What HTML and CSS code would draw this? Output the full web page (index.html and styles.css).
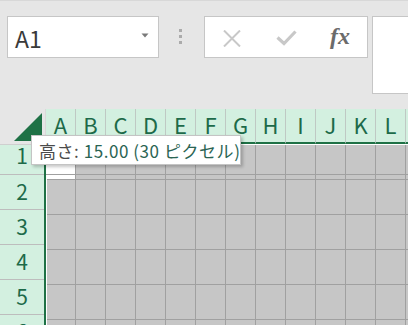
FILE: index.html
```html
<!DOCTYPE html>
<html lang="ja">
<head>
<meta charset="utf-8">
<title>Excel</title>
<link rel="stylesheet" href="styles.css">
</head>
<body>
<div class="app">
  <div class="toolbar">
    <div class="namebox">
      <span class="ref">A1</span>
      <svg class="caret" width="8" height="5" viewBox="0 0 8 5"><polygon points="0.5,0.5 7.5,0.5 4,4.5" fill="#7a7a7a"/></svg>
    </div>
    <div class="grip"><i></i><i></i><i></i></div>
    <div class="fbtns">
      <svg class="cancel" width="18" height="17" viewBox="0 0 18 17"><path d="M1 0.5 L17 16.5 M17 0.5 L1 16.5" stroke="#c8c8c8" stroke-width="2" fill="none"/></svg>
      <svg class="enter" width="21" height="16" viewBox="0 0 21 16"><path d="M1.5 7.5 L8 13.5 L19.5 1.5" stroke="#c8c8c8" stroke-width="3.2" fill="none"/></svg>
      <span class="fx"><i>f</i><i>x</i></span>
    </div>
    <div class="finput"></div>
  </div>
  <div class="sheet">
    <div class="colrow">
      <div class="corner"><svg width="45" height="35" viewBox="0 0 45 35"><polygon points="14,32 42,4 42,32" fill="#1e7145"/></svg></div>
      <div class="cols">
        <div class="ch">A</div><div class="ch">B</div><div class="ch">C</div><div class="ch">D</div><div class="ch">E</div><div class="ch">F</div><div class="ch">G</div><div class="ch">H</div><div class="ch">I</div><div class="ch">J</div><div class="ch">K</div><div class="ch">L</div><div class="ch"></div>
      </div>
    </div>
    <div class="body">
      <div class="rowheads">
        <div class="rh first">1</div>
        <div class="rh">2</div>
        <div class="rh">3</div>
        <div class="rh">4</div>
        <div class="rh">5</div>
        <div class="rh">6</div>
      </div>
      <div class="grid">
        <div class="c active"></div><div class="c"></div><div class="c"></div><div class="c"></div><div class="c"></div><div class="c"></div><div class="c"></div><div class="c"></div><div class="c"></div><div class="c"></div><div class="c"></div><div class="c"></div><div class="c"></div>
        <div class="c"></div><div class="c"></div><div class="c"></div><div class="c"></div><div class="c"></div><div class="c"></div><div class="c"></div><div class="c"></div><div class="c"></div><div class="c"></div><div class="c"></div><div class="c"></div><div class="c"></div>
        <div class="c"></div><div class="c"></div><div class="c"></div><div class="c"></div><div class="c"></div><div class="c"></div><div class="c"></div><div class="c"></div><div class="c"></div><div class="c"></div><div class="c"></div><div class="c"></div><div class="c"></div>
        <div class="c"></div><div class="c"></div><div class="c"></div><div class="c"></div><div class="c"></div><div class="c"></div><div class="c"></div><div class="c"></div><div class="c"></div><div class="c"></div><div class="c"></div><div class="c"></div><div class="c"></div>
        <div class="c"></div><div class="c"></div><div class="c"></div><div class="c"></div><div class="c"></div><div class="c"></div><div class="c"></div><div class="c"></div><div class="c"></div><div class="c"></div><div class="c"></div><div class="c"></div><div class="c"></div>
        <div class="c"></div><div class="c"></div><div class="c"></div><div class="c"></div><div class="c"></div><div class="c"></div><div class="c"></div><div class="c"></div><div class="c"></div><div class="c"></div><div class="c"></div><div class="c"></div><div class="c"></div>
      </div>
      <div class="dragline"></div>
    </div>
    <div class="tooltip"><span class="tiptext"><span class="lbl">高さ:</span> <span class="val">15.00 (30 ピクセル)</span></span></div>
  </div>
</div>
</body>
</html>
```

FILE: styles.css
```css
* { box-sizing: border-box; }
html, body { margin: 0; padding: 0; }
body {
  width: 408px;
  height: 325px;
  overflow: hidden;
  background: #e6e6e6;
  font-family: "Noto Sans CJK JP", "Noto Sans", sans-serif;
}
.app { width: 408px; height: 325px; overflow: hidden; }

.toolbar {
  height: 109px;
  display: flex;
  align-items: flex-start;
  padding: 15px 0 0 7px;
  border-top: 1px solid #d8d8d8;
  overflow: hidden;
}
.namebox {
  width: 152px;
  height: 42px;
  background: #fff;
  border: 1px solid #c6c6c6;
  display: flex;
  align-items: center;
  padding: 0 9px 0 7px;
  flex: none;
}
.ref {
  font-size: 23px;
  line-height: 1;
  color: #3a3a3a;
  padding-top: 3px;
}
.caret { margin-left: auto; margin-top: -4px; }

.grip {
  width: 45px;
  height: 42px;
  flex: none;
  display: flex;
  flex-direction: column;
  gap: 3px;
  padding: 13px 0 0 20px;
}
.grip i { display: block; width: 3px; height: 3px; background: #ababab; }

.fbtns {
  width: 164px;
  height: 42px;
  flex: none;
  background: #fff;
  border: 1px solid #c6c6c6;
  display: flex;
  align-items: center;
  padding-left: 18px;
}
.cancel { margin-top: 2px; }
.enter { margin-left: 35px; margin-top: 1px; }
.fx {
  margin-left: 33px;
  font-family: "Liberation Serif", "DejaVu Serif", serif;
  font-weight: bold;
  font-size: 24px;
  color: #6b6b6b;
  line-height: 1;
  margin-top: -2px;
}
.fx i { font-style: italic; }

.finput {
  margin-left: 4px;
  width: 40px;
  height: 78px;
  flex: none;
  background: #fff;
  border: 1px solid #c6c6c6;
}

.sheet { position: relative; }
.colrow { display: flex; height: 36px; }
.corner {
  width: 46px;
  height: 36px;
  flex: none;
  border-right: 1px solid #d9d9d9;
  border-bottom: 1px solid #cfcfcf;
}
.corner svg { display: block; }
.cols {
  display: flex;
  border-bottom: 1px solid #fff;
  height: 36px;
}
.ch {
  width: 30px;
  height: 35px;
  flex: none;
  background: #d3f0e0;
  border-right: 1px solid #bfc9c4;
  border-bottom: 2px solid #1e7145;
  color: #1d6a49;
  font-size: 22px;
  line-height: 1;
  display: flex;
  justify-content: center;
  align-items: center;
  padding-bottom: 3px;
}

.body { position: relative; display: flex; }
.rowheads {
  width: 46px;
  flex: none;
  background: #d3f0e0;
  border-right: 2px solid #1e7145;
}
.rh {
  height: 35px;
  border-bottom: 1px solid #bdbdbd;
  color: #1d6a49;
  font-size: 21px;
  line-height: 1;
  display: flex;
  justify-content: center;
  align-items: center;
  padding-bottom: 2px;
}
.rh.first { height: 30px; padding-bottom: 9px; }

.grid {
  display: grid;
  grid-template-columns: 29px repeat(12, 30px);
  grid-auto-rows: 35px;
  border-left: 1px solid #fff;
  background: #c6c6c6;
}
.c {
  border-right: 1px solid #a0a0a0;
  border-bottom: 1px solid #a0a0a0;
}
.c.active { background: #fff; }

.dragline {
  position: absolute;
  left: 46px;
  top: 29px;
  width: 362px;
  height: 1px;
  background: #a0a0a0;
}

.tooltip {
  position: absolute;
  left: 31px;
  top: 26px;
  width: 210px;
  height: 30px;
  background: #fff;
  border: 1px solid #c4c4c4;
  box-shadow: 2px 2px 3px rgba(0, 0, 0, 0.22);
  padding-left: 7px;
  display: flex;
  align-items: center;
  font-size: 17px;
  line-height: 1;
}
.tiptext { white-space: pre; letter-spacing: 0.55px; }
.lbl { color: #4a4a4a; }
.val { color: #2b6453; }
```
